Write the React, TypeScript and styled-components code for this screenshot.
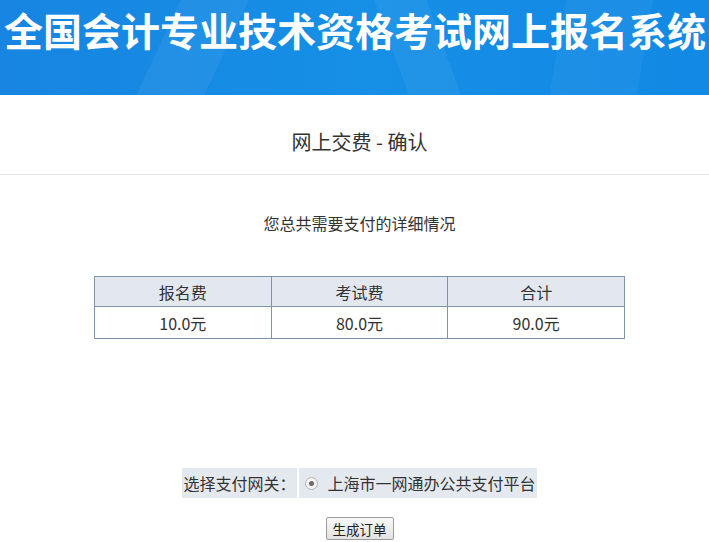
import styled, { createGlobalStyle } from "styled-components";

const GlobalStyle = createGlobalStyle`
  body {
    margin: 0;
    background: #fff;
    font-family: "Noto Sans CJK SC", "Noto Sans", sans-serif;
    color: #333;
  }
`;

const Banner = styled.div`
  height: 95px;
  overflow: hidden;
  background:
    linear-gradient(115deg, transparent 0 24%, rgba(255, 255, 255, 0.05) 24% 33%, transparent 33% 100%),
    linear-gradient(70deg, transparent 0 55%, rgba(255, 255, 255, 0.05) 55% 62%, transparent 62% 100%),
    linear-gradient(100deg, transparent 0 78%, rgba(255, 255, 255, 0.04) 78% 90%, transparent 90% 100%),
    linear-gradient(90deg, #1785e1 0%, #168fe6 50%, #1289e4 100%);
`;

const BannerTitle = styled.h1`
  margin: 0;
  padding: 6px 0 0 4px;
  font-family: "Noto Sans CJK SC", sans-serif;
  font-size: 39px;
  line-height: 46px;
  font-weight: 700;
  color: #fff;
  white-space: nowrap;
`;

const TitleBar = styled.div`
  padding: 33px 0 18px 10px;
  border-bottom: 1px solid #e8e8e8;
  text-align: center;
`;

const PageTitle = styled.h2`
  margin: 0;
  font-size: 20px;
  line-height: 28px;
  font-weight: 400;
  color: #333;
`;

const Main = styled.div`
  padding-left: 10px;
  display: flex;
  flex-direction: column;
  align-items: center;
`;

const Summary = styled.p`
  margin: 37px 0 0;
  font-size: 16px;
  line-height: 22px;
  color: #333;
`;

const FeeTable = styled.table`
  margin-top: 42px;
  width: 531px;
  border-collapse: collapse;
  font-size: 16px;
  color: #333;
`;

const Cell = styled.td<{ $head?: boolean }>`
  width: 33.3%;
  border: 1px solid #7d95ad;
  text-align: center;
  padding: 0;
  height: ${(p) => (p.$head ? "29px" : "31px")};
  background: ${(p) => (p.$head ? "#e3e8f0" : "#fff")};
  font-weight: 400;
`;

const GatewayRow = styled.div`
  margin-top: 129px;
  display: flex;
  gap: 2px;
`;

const GatewayCell = styled.div<{ $pad: string }>`
  height: 30px;
  display: flex;
  align-items: center;
  padding: ${(p) => p.$pad};
  background: #e4e9f0;
  font-size: 16px;
  color: #333;
  white-space: nowrap;
`;

const Radio = styled.span`
  width: 11px;
  height: 11px;
  margin: 1px 10px 0 6px;
  border: 1px solid #b4b4b4;
  border-radius: 50%;
  background: #f4f4f4;
  display: flex;
  align-items: center;
  justify-content: center;

  &::after {
    content: "";
    width: 5px;
    height: 5px;
    border-radius: 50%;
    background: #6b6b6b;
  }
`;

const SubmitButton = styled.button`
  margin-top: 19px;
  width: 68px;
  height: 23px;
  padding: 0;
  border: 1px solid #9c9c9c;
  border-radius: 2px;
  background: linear-gradient(#f8f8f8, #e2e2e2);
  font-family: "Noto Sans CJK SC", sans-serif;
  font-size: 13.5px;
  color: #222;
`;

const fees = [
  { name: "报名费", amount: "10.0元" },
  { name: "考试费", amount: "80.0元" },
  { name: "合计", amount: "90.0元" },
];

export default function App() {
  return (
    <>
      <GlobalStyle />
      <Banner>
        <BannerTitle>全国会计专业技术资格考试网上报名系统</BannerTitle>
      </Banner>
      <TitleBar>
        <PageTitle>网上交费 - 确认</PageTitle>
      </TitleBar>
      <Main>
        <Summary>您总共需要支付的详细情况</Summary>
        <FeeTable>
          <tbody>
            <tr>
              {fees.map((f) => (
                <Cell as="th" $head key={f.name}>
                  {f.name}
                </Cell>
              ))}
            </tr>
            <tr>
              {fees.map((f) => (
                <Cell key={f.name}>{f.amount}</Cell>
              ))}
            </tr>
          </tbody>
        </FeeTable>
        <GatewayRow>
          <GatewayCell $pad="0 1px 0 1px">选择支付网关：</GatewayCell>
          <GatewayCell $pad="0 1px 0 0">
            <Radio />
            上海市一网通办公共支付平台
          </GatewayCell>
        </GatewayRow>
        <SubmitButton>生成订单</SubmitButton>
      </Main>
    </>
  );
}
